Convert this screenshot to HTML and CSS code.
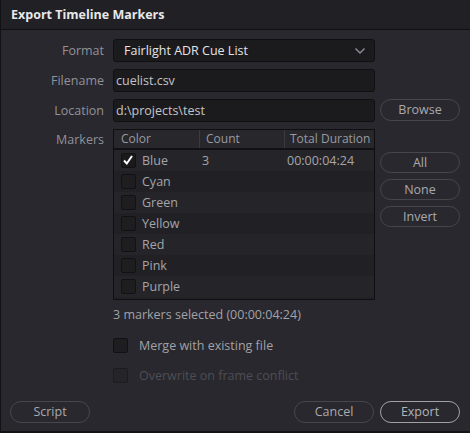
FILE: index.html
```html
<!DOCTYPE html>
<html>
<head>
<meta charset="utf-8">
<link rel="stylesheet" href="styles.css">
</head>
<body>
<div class="dialog">
  <div class="titlebar">Export Timeline Markers</div>
  <div class="content">
    <div class="form">
      <div class="label">Format</div>
      <div class="combo"><span>Fairlight ADR Cue List</span>
        <svg class="chev" width="12" height="8" viewBox="0 0 12 8"><path d="M1.5 1.5 L6 6 L10.5 1.5" fill="none" stroke="#8a8a8e" stroke-width="1.5"/></svg>
      </div>
      <div></div>

      <div class="label">Filename</div>
      <div class="field">cuelist.csv</div>
      <div></div>

      <div class="label">Location</div>
      <div class="field">d:\projects\test</div>
      <div class="side"><button class="btn">Browse</button></div>

      <div class="label top">Markers</div>
      <div class="table">
        <div class="thead">
          <div class="c1">Color</div><div class="c2">Count</div><div class="c3">Total Duration</div>
        </div>
        <div class="row"><div class="c1"><span class="cb checked"><svg width="14" height="14" viewBox="0 0 14 14"><path d="M3 7.5 L5.8 10.5 L11 3" fill="none" stroke="#fff" stroke-width="2"/></svg></span>Blue</div><div class="c2">3</div><div class="c3">00:00:04:24</div></div>
        <div class="row alt"><div class="c1"><span class="cb"></span>Cyan</div><div class="c2"></div><div class="c3"></div></div>
        <div class="row"><div class="c1"><span class="cb"></span>Green</div><div class="c2"></div><div class="c3"></div></div>
        <div class="row alt"><div class="c1"><span class="cb"></span>Yellow</div><div class="c2"></div><div class="c3"></div></div>
        <div class="row"><div class="c1"><span class="cb"></span>Red</div><div class="c2"></div><div class="c3"></div></div>
        <div class="row alt"><div class="c1"><span class="cb"></span>Pink</div><div class="c2"></div><div class="c3"></div></div>
        <div class="row"><div class="c1"><span class="cb"></span>Purple</div><div class="c2"></div><div class="c3"></div></div>
      </div>
      <div class="side stack">
        <button class="btn">All</button>
        <button class="btn">None</button>
        <button class="btn">Invert</button>
      </div>
    </div>

    <div class="options">
      <div class="summary">3 markers selected (00:00:04:24)</div>
      <div class="check"><span class="cb"></span>Merge with existing file</div>
      <div class="check disabled"><span class="cb"></span>Overwrite on frame conflict</div>
    </div>

    <div class="footer">
      <button class="btn">Script</button>
      <div class="right">
        <button class="btn">Cancel</button>
        <button class="btn primary">Export</button>
      </div>
    </div>
  </div>
</div>
</body>
</html>
```
FILE: styles.css
```css
* { box-sizing: border-box; }
html, body { margin: 0; padding: 0; background: #28282e; }
body { font-family: "Open Sans", "Noto Sans", sans-serif; font-size: 12.5px; color: #d4d4d6; }
.dialog {
  width: 470px; height: 433px;
  background: #28282e;
  border-left: 1px solid #131316;
  border-bottom: 2px solid #131316;
  display: flex; flex-direction: column;
}
.titlebar {
  height: 30px;
  background: #212125;
  border-bottom: 1px solid #111114;
  padding-left: 10px;
  font-weight: 700;
  font-size: 12.5px;
  color: #e8e8ea;
  line-height: 29px;
}
.content { flex: 1; display: flex; flex-direction: column; padding-top: 9px; }
.form {
  display: grid;
  grid-template-columns: 112px 262px 85px;
  row-gap: 7px;
  align-items: start;
}
.label {
  text-align: right;
  padding-right: 9px;
  color: #919197;
  line-height: 23px;
  height: 23px;
}
.label.top { line-height: 21px; }
.combo, .field {
  height: 23px;
  background: #1b1b1e;
  border: 1px solid #101012;
  border-radius: 3px;
  line-height: 21px;
  padding-left: 10px;
  color: #e4e4e6;
}
.combo { display: flex; align-items: center; justify-content: space-between; padding-right: 8px; line-height: normal; }
.field { padding-left: 2px; color: #c4c4c8; }
.side { padding-left: 5px; }
.stack { display: flex; flex-direction: column; gap: 6px; padding-top: 23px; }
.btn {
  font-family: inherit; font-size: 12.5px;
  width: 80px; height: 22px;
  border-radius: 11px;
  border: 1px solid #46464c;
  background: transparent;
  color: #a9a9ae;
  padding: 0;
  line-height: 20px;
}
.stack .btn { height: 21px; line-height: 19px; }
.btn.primary { border-color: #a2a2a6; color: #b4b4b8; }
.table {
  height: 171px;
  border: 1px solid #0f0f11;
  background: #222226;
}
.thead {
  display: flex;
  height: 20px;
  background: #27272c;
  border-bottom: 2px solid #111113;
  color: #9a9aa0;
  font-size: 12px;
  line-height: 18px;
}
.thead .c1, .thead .c2 { border-right: 1px solid #3a3a40; }
.c1 { width: 86px; padding-left: 7px; display: flex; align-items: center; }
.c2 { width: 85px; padding-left: 6px; }
.c3 { flex: 1; padding-left: 5px; }
.thead .c1 { display: block; }
.row {
  display: flex;
  height: 21px;
  line-height: 21px;
  color: #a5a5aa;
  background: #242429;
}
.row.alt { background: #212125; }
.row .c1 { padding-left: 7px; }
.row .c2 { padding-left: 2px; }
.row .c3 { padding-left: 2px; }
.cb {
  display: inline-block;
  width: 15px; height: 15px;
  border: 1px solid #121214;
  border-radius: 2px;
  background: #1e1e21;
  margin-right: 6px;
  flex: none;
  position: relative;
}
.cb svg { position: absolute; left: -1px; top: -1px; }
.cb.checked { background: #1a1a1c; }
.options { padding-left: 112px; padding-top: 6px; }
.summary { color: #a2a2a7; line-height: 18px; height: 32px; }
.check { display: flex; align-items: center; height: 15px; color: #a2a2a7; margin-bottom: 15px; }
.check .cb { margin-right: 11px; }
.check.disabled { color: #4e4e54; }
.check.disabled .cb { background: #252529; border-color: #1c1c20; }
.footer {
  margin-top: auto;
  display: flex;
  justify-content: space-between;
  padding: 0 10px 8px 9px;
}
.right { display: flex; gap: 6px; }
```
